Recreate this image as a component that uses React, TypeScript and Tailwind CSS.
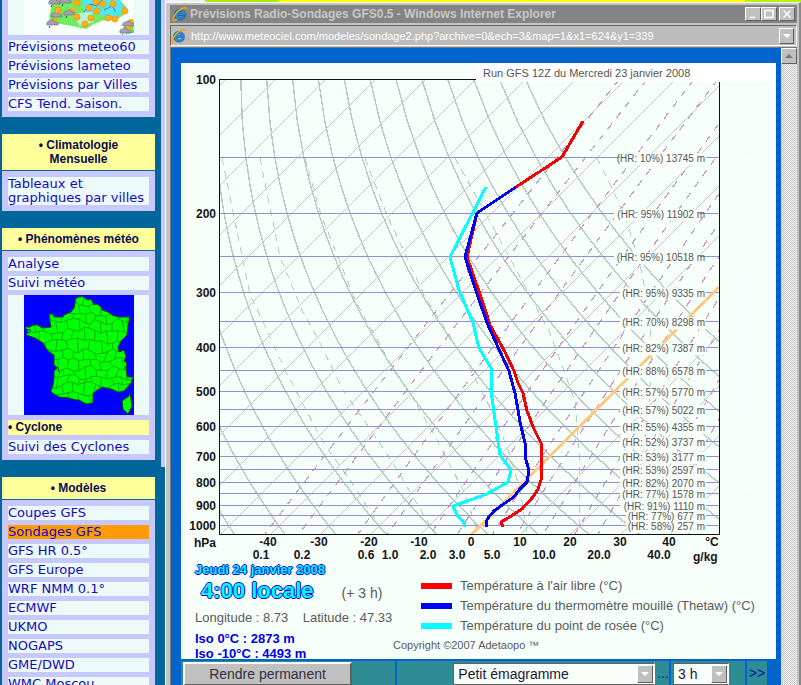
import React from "react";

/* ---------- Emagram geometry ---------- */

const LEFT = 219.5;
const RIGHT = 719.5;
const TOP = 79.5;
const BOTTOM = 534;
const yOf = (p: number) => TOP + Math.log10(p / 100) * 446.5;
const xOf = (t: number, y: number) => 471 + 5 * t + (BOTTOM - y);
const toPath = (pts: number[][]) =>
  "M" + pts.map(([x, y]) => `${x.toFixed(1)} ${y.toFixed(1)}`).join("L");

const pressures = Array.from({ length: 18 }, (_, i) => 150 + i * 50);
const steps = Array.from({ length: 40 }, (_, i) => 100 + (945 * i) / 39);
const isotherms = Array.from({ length: 19 }, (_, i) => -140 + i * 10).filter((t) => t !== 0);
const dryAdiabats = Array.from({ length: 17 }, (_, i) => -60 + i * 10);
const mixingRatios = [0.1, 0.2, 0.6, 1, 2, 3, 5, 7, 10, 15, 20, 30, 40];

const dryPath = (theta: number) =>
  toPath(
    steps.map((p) => {
      const y = yOf(p);
      return [xOf((theta + 273.15) * Math.pow(p / 1000, 0.286) - 273.15, y), y];
    }),
  );

const mixPath = (w: number) =>
  toPath(
    steps.map((p) => {
      const l = Math.log((w * p) / (622 + w) / 6.112);
      const y = yOf(p);
      return [xOf((243.5 * l) / (17.67 - l), y), y];
    }),
  );

const moistAdiabats = [
  "222,158 250,295 267,330 284,368 302,402 318,433 330,452 357,490 367,507 382,530",
  "260,158 280,257 295,293 302,310 317,337 343,390 373,433 393,463 413,497 434,532",
  "305,158 321,215 355,300 390,363 408,390 437,440 463,490 478,532",
  "365,158 387,215 425,297 467,363 495,417 510,455 520,490 527,532",
  "455,158 493,227 527,290 550,333 563,368 575,402 579,450 579,532",
  "597,158 613,190 628,225 640,265 645,290 650,320 652,370 648,420 640,470 632,532",
];

const redCurve =
  "583,121 562,157 516,187 477,213 467,257 481,297 490,325 505,352 514,371 518,383 523,393 527,411 534,429 541,443 541,460 542,467 541,480 538,489 533,497 522,509 508,518 501,522 503,527";
const blueCurve =
  "516,187 477,213 465,257 478,297 488,325 497,345 509,371 515,393 518,410 520,422 525,443 526,460 529,470 527,482 520,489 514,497 505,503 494,511 488,518 486,522 487,527";
const cyanCurve =
  "486,187 450,257 459,290 473,323 479,348 491,368 491,390 495,420 500,455 511,470 508,482 487,494 453,506 457,515 464,523 464,527";

const levels = [
  "(HR: 10%) 13745 m",
  "(HR:  95%) 11902 m",
  "(HR:  95%) 10518 m",
  "(HR: 95%) 9335 m",
  "(HR: 70%) 8298 m",
  "(HR: 82%) 7387 m",
  "(HR: 88%) 6578 m",
  "(HR: 57%) 5770 m",
  "(HR: 57%) 5022 m",
  "(HR: 55%) 4355 m",
  "(HR: 52%) 3737 m",
  "(HR: 53%) 3177 m",
  "(HR: 53%) 2597 m",
  "(HR: 82%) 2070 m",
  "(HR: 77%) 1578 m",
  "(HR: 91%) 1110 m",
  "(HR: 77%) 677 m",
  "(HR: 58%) 257 m",
];

const tempLabels: [string, number][] = [
  ["-40", 268], ["-30", 319], ["-20", 369], ["-10", 419], ["0", 471], ["10", 520], ["20", 570], ["30", 620], ["40", 669], ["°C", 712],
];
const ratioLabels: [string, number][] = [
  ["0.1", 261], ["0.2", 302], ["0.6", 366], ["1.0", 390], ["2.0", 428], ["3.0", 457], ["5.0", 492], ["10.0", 544], ["20.0", 599], ["40.0", 659],
];

function Emagram() {
  return (
    <svg viewBox="181 63 595 502" className="block w-[595px] max-w-none shrink-0" role="img" aria-label="Émagramme">
      <defs>
        <clipPath id="plot">
          <rect x={LEFT} y={TOP} width={RIGHT - LEFT} height={BOTTOM - TOP} />
        </clipPath>
      </defs>
      <g clipPath="url(#plot)" fill="none" shapeRendering="crispEdges">
        {isotherms.map((t) => (
          <line key={t} x1={xOf(t, BOTTOM)} y1={BOTTOM} x2={xOf(t, TOP)} y2={TOP} stroke="#ccc4c6" strokeWidth={t % 20 ? 1 : 1.4} />
        ))}
        {dryAdiabats.map((t) => (
          <path key={t} d={dryPath(t)} stroke="#b7cbc3" strokeWidth="1.4" />
        ))}
        {moistAdiabats.map((p) => (
          <polyline key={p} points={p} stroke="#b2d2c2" strokeDasharray="7 6" />
        ))}
        {mixingRatios.map((w) => (
          <path key={w} d={mixPath(w)} stroke="#c898c8" strokeWidth="1.2" strokeDasharray="7 7" />
        ))}
        {pressures.map((p) => (
          <line key={p} x1={LEFT} x2={RIGHT} y1={Math.round(yOf(p)) - 0.5} y2={Math.round(yOf(p)) - 0.5} stroke="#9292c8" />
        ))}
      </g>
      <path d="M471 535L719 287" stroke="#ffc878" strokeWidth="3" />
      <g fill="#f8fffb">
        {pressures.map((p, i) => (
          <rect key={p} x={i === 1 || i === 2 ? 614 : i > 15 ? 626 : 620} y={yOf(p) - 5} width={i > 15 ? 80 : 86} height="12" />
        ))}
      </g>
      <g stroke="#fff" fill="none">
        <path d="M725 155l25 5l-8-5m8 5l-8 4M727 178l20 17m-14-17l14 17M729 202l16 20m-10-22l10 22M732 224l12 22M733 243l8 28M741 260v160M741 420l-10 60M741 420l10 60M731 489h22M741 480l-8 50M741 480l10 50" />
      </g>
      <path d="M219.5 79.5V534M219 79.5H720M719.5 79V534M219 534H720" stroke="#111" strokeWidth="1" fill="none" shapeRendering="crispEdges" />
      <rect x="476" y="63" width="300" height="19" fill="#fff" />
      <g fill="none" strokeWidth="3" shapeRendering="crispEdges" strokeLinejoin="round">
        <polyline points={cyanCurve} stroke="#00ffff" />
        <polyline points={redCurve} stroke="#f40000" />
        <polyline points={blueCurve} stroke="#0000f0" />
      </g>
      <g className="font-['Liberation_Sans',Arial,sans-serif]" fill="#555">
        <text x="483" y="77" className="text-[11px]">Run GFS 12Z du Mercredi 23 janvier 2008</text>
        {levels.map((t, i) => (
          <text key={t} x="705" y={yOf(pressures[i]) + 4} textAnchor="end" className="text-[10px]">{t}</text>
        ))}
      </g>
      <g className="font-['Liberation_Sans',Arial,sans-serif] text-[12px] font-bold" fill="#151515">
        {[100, 200, 300, 400, 500, 600, 700, 800, 900, 1000].map((p) => (
          <text key={p} x="216" y={Math.round(yOf(p)) + 4} textAnchor="end">{p}</text>
        ))}
        <text x="194" y="547">hPa</text>
        {tempLabels.map(([t, x]) => (
          <text key={t} x={x} y="546" textAnchor="middle">{t}</text>
        ))}
        {ratioLabels.map(([t, x]) => (
          <text key={t} x={x} y="559" textAnchor="middle">{t}</text>
        ))}
        <text x="693" y="561">g/kg</text>
      </g>
    </svg>
  );
}

/* ---------- Maps of the side menu ---------- */

const FRANCE =
  "52,3 58,1 62,4 64,5 67,4 70,10 73,9 77,12 78,15 84,17 88,20 94,22 106,22 104,30 103,40 97,46 94,52 95,57 100,55 102,62 100,66 103,68 102,72 103,82 109,82 107,88 100,96 94,97 87,94 78,92 69,98 69,108 62,109 55,105 52,105 45,103 35,102 27,97 29,90 30,82 30,76 33,73 30,70 30,60 25,57 22,53 19,48 11,43 2,40 4,37 1,32 6,32 9,30 14,30 18,33 27,32 26,27 25,19 29,19 30,22 39,22 40,20 47,17 50,13";

const jitter = (r: number, c: number, k: number) => {
  const s = Math.sin(r * 127.1 + c * 311.7 + k * 74.7) * 43758.5453;
  return (s - Math.floor(s) - 0.5) * 5;
};
const node = (r: number, c: number): number[] => [
  c * 11 + (r % 2 ? 5 : 0) + jitter(r, c, 1),
  r * 9 + (c % 2 ? 2 : -1) + jitter(r, c, 2),
];
const borders = Array.from({ length: 14 }, (_, r) =>
  Array.from({ length: 12 }, (_, c) => {
    const a = node(r, c);
    const b = node(r, c + 1);
    const m = [(a[0] + b[0]) / 2, (a[1] + b[1]) / 2 + jitter(r, c, 3)];
    return toPath([a, m, b]) + toPath([m, node(r + 1, r % 2 ? c + 1 : c)]);
  }).join(""),
).join("");

function FranceMap() {
  return (
    <svg viewBox="0 0 110 120" className="mx-auto block w-[110px] bg-[#0000ff]" role="img" aria-label="Suivi météo">
      <defs>
        <clipPath id="france"><polygon points={FRANCE} /></clipPath>
      </defs>
      <polygon points={FRANCE} fill="#00ff00" stroke="#064806" strokeWidth="1" />
      <path d={borders} clipPath="url(#france)" fill="none" stroke="#05a005" strokeWidth="0.8" />
      <path d="M106 98l1 7l1 6l-4 8l-5-5l-1-8l4-3l3-2z" fill="#00ff00" stroke="#064806" />
      <path d="M2 34l5 1l-3 3M29 69l5 4l2 6" stroke="#063" fill="none" />
    </svg>
  );
}

const suns = [[34, 10], [53, 3], [65, 8], [72, 2], [79, 4], [73, 11], [89, 4], [101, 11], [53, 17], [84, 18], [91, 19], [61, 24], [67, 18]];
const clouds = [[30, 2], [41, 1], [32, 15], [45, 13], [28, 23], [104, 24], [101, 31]];

function WeatherMap() {
  return (
    <svg viewBox="0 0 110 35" className="mx-auto block w-[110px] bg-[#f8fffc]" role="img" aria-label="Carte de prévisions">
      <path d="M28 0H96L103 8L101 14L92 20H80L70 24L62 29L48 26L25 22Z" fill="#70ec60" />
      <path d="M58 0H96L101 12L88 18L72 14L60 12Z" fill="#50e8f4" />
      <path d="M48 14L68 12L70 22L56 26Z" fill="#b8f4d8" />
      <path d="M109 19l1 14l-8 1l-3-6z" fill="#60e850" />
      <path d="M60 12L66 4L73 6L78 0M80 10L88 6L92 12" stroke="#1860a0" fill="none" strokeWidth="0.7" />
      {clouds.map(([x, y]) => (
        <g key={`${x}-${y}`}>
          <circle cx={x + 3} cy={y - 2} r="3" fill="#ffae10" />
          <path d={`M${x - 5} ${y + 2}q-1-4 3-4q3-3 5 1q4 0 3 3z`} fill="#a2a0b2" stroke="#686878" strokeWidth="0.6" />
          <path d={`M${x - 2} ${y + 3}l-1 2`} stroke="#444" />
        </g>
      ))}
      {suns.map(([x, y]) => (
        <circle key={`${x}-${y}`} cx={x} cy={y} r="3.1" fill="#ffb414" stroke="#f09010" strokeWidth="0.8" />
      ))}
    </svg>
  );
}

/* ---------- Side menu ---------- */

function MenuLink({ children, active = false }: { children: React.ReactNode; active?: boolean }) {
  return (
    <a
      href="#"
      className={`block text-[13px] leading-[14px] text-[#1408c0] ${active ? "bg-[#ff9c08]" : "bg-[#edfafa]"}`}
    >
      {children}
    </a>
  );
}

function MenuBox({ title, children }: { title?: React.ReactNode; children: React.ReactNode }) {
  return (
    <section>
      {title && (
        <h2 className="mb-px bg-[#ffff9c] py-1 text-center font-['Liberation_Sans',Arial,sans-serif] text-[12px] leading-[14px] font-bold text-[#0b0b50]">
          {title}
        </h2>
      )}
      <div className={`flex flex-col gap-[5px] bg-[#c6c8ff] px-1.5 pb-1.5 ${title ? "pt-1.5" : ""}`}>{children}</div>
    </section>
  );
}

function IeIcon() {
  return (
    <svg viewBox="0 0 16 16" className="block size-4 shrink-0" aria-hidden="true">
      <path d="M13.500 9.500H5.800c.4 2.800 3.700 3 4.700 1.200H13.300C11.300 16 2.300 15 2.500 8.500C2.700 1.700 13.500 1.500 13.500 9.500ZM5.800 7.300h4.600C10 4.900 6.200 4.900 5.800 7.300Z" fill="#2090e0" stroke="#0c4c90" strokeWidth="0.6" />
      <path d="M14.800 3.600C15 .3 10.500 1.400 6.500 4.800C2.200 8.500 -.2 13.300 1.600 14.300C2.500 14.800 4 14 4.800 13.400" fill="none" stroke="#f0a818" strokeWidth="1.500" />
    </svg>
  );
}

const raised = "border border-t-white border-l-white border-r-[#606060] border-b-[#606060] bg-[#c0c0c0]";

function TitleButton({ label, children }: { label: string; children: React.ReactNode }) {
  return (
    <button aria-label={label} className={`flex h-[14px] w-4 items-center justify-center ${raised}`}>
      <svg viewBox="0 0 10 10" className="size-[10px]" fill="none" stroke="#fff" strokeWidth="1.500">{children}</svg>
    </button>
  );
}

function Picker({ label, options, width }: { label: string; options: string[]; width: string }) {
  return (
    <div className={`relative h-[22px] border border-[#606060] border-r-white bg-[#f8fffa] ${width}`}>
      <select aria-label={label} className="h-full w-full appearance-none pl-1 text-[14px] leading-5 text-[#181838] outline-none">
        {options.map((o) => (
          <option key={o}>{o}</option>
        ))}
      </select>
      <span className={`pointer-events-none absolute top-px right-px flex h-[18px] w-4 items-center justify-center ${raised}`}>
        <svg viewBox="0 0 8 4" className="w-2" fill="#fff"><path d="M0 0h8l-4 4z" /></svg>
      </span>
    </div>
  );
}

function Legend({ swatch, children }: { swatch: string; children: React.ReactNode }) {
  return (
    <li className="flex h-5 items-center gap-2">
      <span className={`h-1.5 w-[31px] shrink-0 ${swatch}`} />
      <span className="whitespace-nowrap">{children}</span>
    </li>
  );
}

const outlined =
  "text-[#00ffff] [text-shadow:1px_0_#0000e8,-1px_0_#0000e8,0_1px_#0000e8,0_-1px_#0000e8]";

export default function App() {
  return (
    <div className="flex h-screen overflow-hidden bg-[#00669c] font-['DejaVu_Sans',Verdana,sans-serif]">
      <nav className="flex w-[161px] shrink-0 flex-col gap-[17px] pr-1.5 pl-0.5">
        <MenuBox>
          <div className="bg-[#edfafa]"><WeatherMap /></div>
          <MenuLink>Prévisions meteo60</MenuLink>
          <MenuLink>Prévisions lameteo</MenuLink>
          <MenuLink>Prévisions par Villes</MenuLink>
          <MenuLink>CFS Tend. Saison.</MenuLink>
        </MenuBox>
        <MenuBox title={<>• Climatologie<br />Mensuelle</>}>
          <MenuLink>Tableaux et<br />graphiques par villes</MenuLink>
        </MenuBox>
        <MenuBox title="• Phénomènes météo">
          <MenuLink>Analyse</MenuLink>
          <MenuLink>Suivi météo</MenuLink>
          <div className="bg-[#edfafa]"><FranceMap /></div>
          <h3 className="bg-[#ffff9c] font-['Liberation_Sans',Arial,sans-serif] text-[12px] leading-[15px] font-bold text-[#0b0b50]">• Cyclone</h3>
          <MenuLink>Suivi des Cyclones</MenuLink>
        </MenuBox>
        <MenuBox title="• Modèles">
          <MenuLink>Coupes GFS</MenuLink>
          <MenuLink active>Sondages GFS</MenuLink>
          <MenuLink>GFS HR 0.5°</MenuLink>
          <MenuLink>GFS Europe</MenuLink>
          <MenuLink>WRF NMM 0.1°</MenuLink>
          <MenuLink>ECMWF</MenuLink>
          <MenuLink>UKMO</MenuLink>
          <MenuLink>NOGAPS</MenuLink>
          <MenuLink>GME/DWD</MenuLink>
          <MenuLink>WMC Moscou</MenuLink>
        </MenuBox>
      </nav>
      <div className="h-[467px] w-1 shrink-0 bg-[#c6c8ff]" />

      <div className="flex min-w-0 flex-1 flex-col">
        <div className="flex h-0.5 shrink-0">
          <div className="w-10 bg-[#e8f4f4]" />
          <div className="w-[74px] bg-[#a8f000]" />
          <div className="flex-1 bg-[#ffff00]" />
          <div className="w-14 bg-[#b8f400]" />
        </div>
        <main className="flex min-h-0 flex-1 flex-col border-t border-r-2 border-l border-t-white border-r-[#888] border-l-white bg-[#c4c4c4] pt-0.5 pr-0.5 pl-1 font-['Liberation_Sans',Arial,sans-serif]">
          <header className="flex h-[18px] shrink-0 items-center gap-0.5 bg-[#848484] pr-0.5 pl-0.5">
            <IeIcon />
            <h1 className="flex-1 truncate text-[12px] leading-4 font-bold text-[#c8c8c8]">Prévisions Radio-Sondages GFS0.5 - Windows Internet Explorer</h1>
            <div className="flex">
              <TitleButton label="Réduire"><path d="M2 8.500h5" /></TitleButton>
              <TitleButton label="Agrandir"><path d="M1 1.500h8v7h-8z" /></TitleButton>
              <span className="w-0.5" />
              <TitleButton label="Fermer"><path d="M1.500 1.500l7 7M8.500 1.500l-7 7" /></TitleButton>
            </div>
          </header>
          <div className="mt-0.5 flex h-[21px] shrink-0 items-center gap-1 border border-t-[#666] border-r-white border-b-white border-l-[#666] bg-[#bcbcbc] pr-0.5">
            <IeIcon />
            <input
              aria-label="Adresse"
              readOnly
              value="http://www.meteociel.com/modeles/sondage2.php?archive=0&ech=3&map=1&x1=624&y1=339"
              className="min-w-0 flex-1 bg-transparent text-[11px] leading-4 text-white outline-none"
            />
            <button aria-label="Historique" className={`flex h-4 w-[15px] items-center justify-center ${raised}`}>
              <svg viewBox="0 0 8 4" className="w-2" fill="#fff"><path d="M0 0h8l-4 4z" /></svg>
            </button>
          </div>
          <div className="mt-px flex min-h-0 flex-1 border-t border-l border-t-[#777] border-l-[#777]">
            <div className="flex min-w-0 flex-1 flex-col overflow-hidden bg-[#0063ce] pt-[15px] pl-2.5">
              <article className="flex w-[595px] shrink-0 flex-col bg-[#f7fffa]">
                <Emagram />
                <div className="flex h-[94px] text-[#5a5a5a]">
                  <div className="w-[240px] shrink-0 pl-3.5">
                    <p className={`text-[13px] leading-[10px] font-bold ${outlined}`}>Jeudi 24 janvier 2008</p>
                    <p className="flex items-baseline gap-7 pl-1.5 leading-8">
                      <span className={`text-[22px] font-bold ${outlined}`}>4:00 locale</span>
                      <span className="text-[14px]">(+ 3 h)</span>
                    </p>
                    <p className="mb-1 text-[13px] leading-[18px] whitespace-pre">Longitude : 8.73    Latitude : 47.33</p>
                    <p className="text-[13px] leading-[15px] font-bold text-[#0000e8]">Iso 0°C : 2873 m</p>
                    <p className="text-[13px] leading-[15px] font-bold text-[#0000e8]">Iso -10°C : 4493 m</p>
                  </div>
                  <div className="pt-[11px]">
                    <ul className="text-[13px]">
                      <Legend swatch="bg-[#ff0000]">Température à l'air libre (°C)</Legend>
                      <Legend swatch="bg-[#0000ff]">Température du thermomètre mouillé (Thetaw) (°C)</Legend>
                      <Legend swatch="bg-[#00ffff]">Température du point de rosée (°C)</Legend>
                    </ul>
                    <p className="-ml-7 text-[11px] leading-[18px]">Copyright ©2007 Adetaopo ™</p>
                  </div>
                </div>
              </article>
              <form className="mt-0.5 flex h-8 w-[586px] shrink-0 gap-0.5 text-[14px]">
                <div className="w-[214px] bg-[#2f8c94] pt-px pl-0.5">
                  <button type="button" className="h-6 w-[169px] border-2 border-t-white border-r-[#606060] border-b-[#606060] border-l-white bg-[#c0c0c0] text-[#303040]">Rendre permanent</button>
                </div>
                <div className="flex w-[272px] justify-end gap-0.5 bg-[#2f8c94] pt-0.5">
                  <Picker label="Type de diagramme" options={["Petit émagramme", "Grand émagramme"]} width="w-[202px]" />
                  <a href="#" className="text-[#0808b8]">...</a>
                </div>
                <div className="flex-1 bg-[#2f8c94] pt-0.5 pl-0.5">
                  <Picker label="Échéance" options={["3 h", "6 h"]} width="w-14" />
                </div>
                <div className="w-5 bg-[#2f8c94] pt-0.5 text-center">
                  <a href="#" className="text-[#0808b8]">&gt;&gt;</a>
                </div>
              </form>
            </div>
            <div className="w-4 shrink-0 bg-[#ddd] bg-[repeating-conic-gradient(#c0c0c0_0_25%,#ffffff_0_50%)] bg-[length:2px_2px]">
              <button aria-label="Défiler vers le haut" className={`flex h-4 w-4 items-center justify-center ${raised}`}>
                <svg viewBox="0 0 8 4" className="w-2" fill="#777"><path d="M0 4h8l-4-4z" /></svg>
              </button>
            </div>
          </div>
        </main>
      </div>
    </div>
  );
}
